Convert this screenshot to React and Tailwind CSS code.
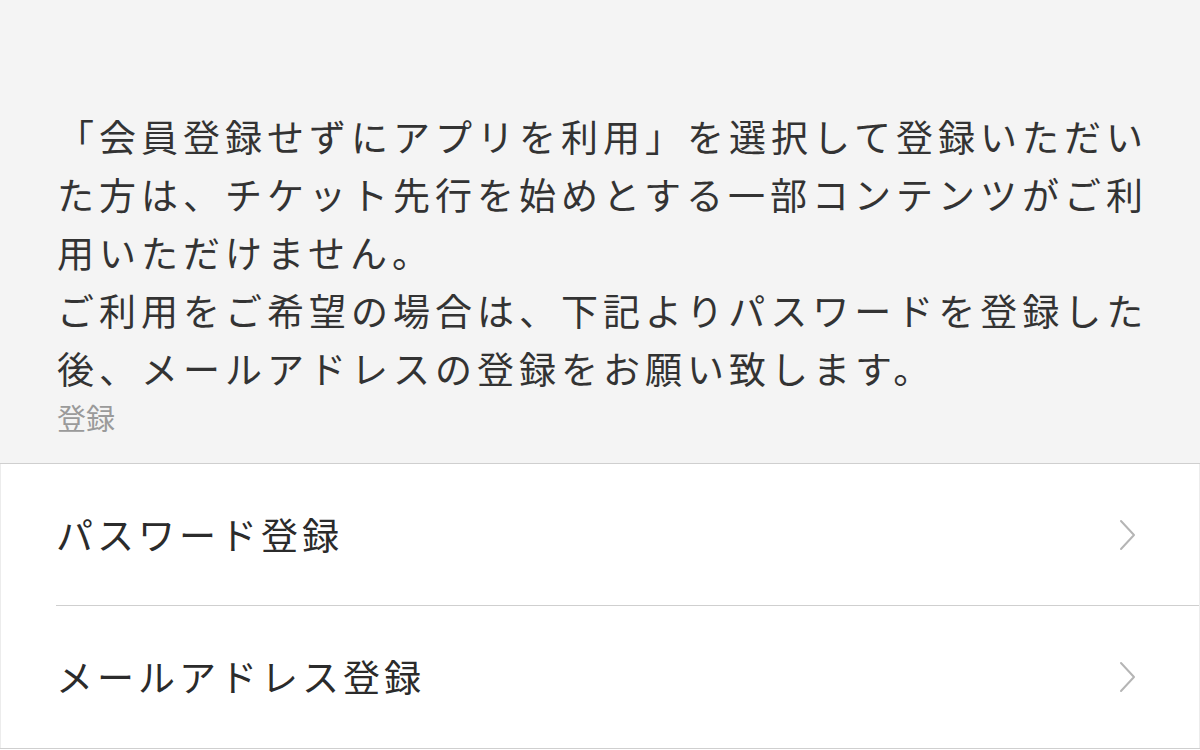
const notice = [
  '「会員登録せずにアプリを利用」を選択して登録いただい',
  'た方は、チケット先行を始めとする一部コンテンツがご利',
  '用いただけません。',
  'ご利用をご希望の場合は、下記よりパスワードを登録した',
  '後、メールアドレスの登録をお願い致します。',
]

const rows = ['パスワード登録', 'メールアドレス登録']

function Chevron() {
  return (
    <svg width="18" height="32" viewBox="0 0 18 32" fill="none" className="text-[#b5b5b5]">
      <polyline points="3,2 16,16 3,30" stroke="currentColor" strokeWidth="2" strokeLinecap="round" strokeLinejoin="round" />
    </svg>
  )
}

export default function App() {
  return (
    <div className="h-[750px] w-[1200px] overflow-hidden bg-white font-['Noto_Sans_CJK_JP','Noto_Sans',sans-serif] text-[#333]">
      <section className="border-b border-[#cfcfcf] bg-[#f4f4f4] pb-[26px] pl-[57px] pt-[107px]">
        {notice.map(line => (
          <div key={line} className="whitespace-nowrap text-[37px] leading-[58px] tracking-[5px]">
            {line}
          </div>
        ))}
        <div className="text-[29px] leading-[40px] text-[#9a9a9a]">登録</div>
      </section>

      <ul className="border-x border-[#ececec]">
        {rows.map((label, i) => (
          <li key={label} className="pl-[55px]">
            <div className={`flex h-[142px] items-center justify-between pr-[63px] ${i === 0 ? 'border-b border-[#cfcfcf]' : ''}`}>
              <span className="text-[37px] tracking-[4px] text-[#2b2b2b]">{label}</span>
              <Chevron />
            </div>
          </li>
        ))}
      </ul>
      <div className="border-t border-[#cfcfcf]" />
    </div>
  )
}
